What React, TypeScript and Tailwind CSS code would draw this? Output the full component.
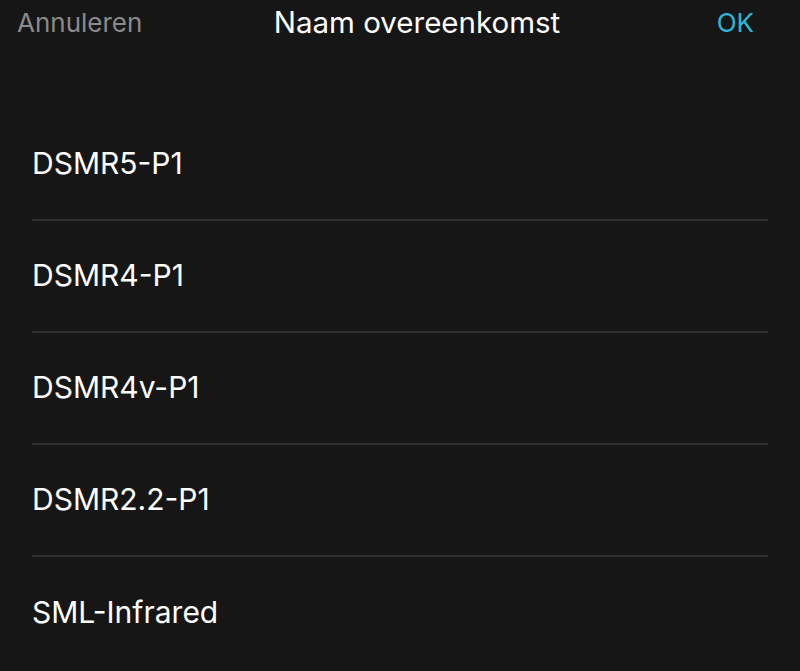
import React from 'react'

const items = ['DSMR5-P1', 'DSMR4-P1', 'DSMR4v-P1', 'DSMR2.2-P1', 'SML-Infrared']

const App = () => {
    return (
        <div className="w-[800px] h-[671px] bg-[#161616] overflow-hidden font-['Inter','Liberation_Sans',sans-serif]">
            <div className="relative flex items-center justify-between h-[45px] px-[17px] text-[26px] leading-none">
                <span className="text-[#8a8a8a]">Annuleren</span>
                <span className="absolute left-1/2 -translate-x-1/2 text-white text-[29.5px] ml-[17px]">Naam overeenkomst</span>
                <span className="text-[#2bb8d6] mr-[29px]">OK</span>
            </div>

            <div className="mt-[64px] px-[32px]">
                {items.map((item, i) => (
                    <div
                        key={item}
                        className={`flex items-center h-[112px] pb-[2px] text-[30px] text-white ${i < items.length - 1 ? 'border-b-2 border-[#303030]' : ''}`}
                    >
                        {item}
                    </div>
                ))}
            </div>
        </div>
    )
}

export default App
